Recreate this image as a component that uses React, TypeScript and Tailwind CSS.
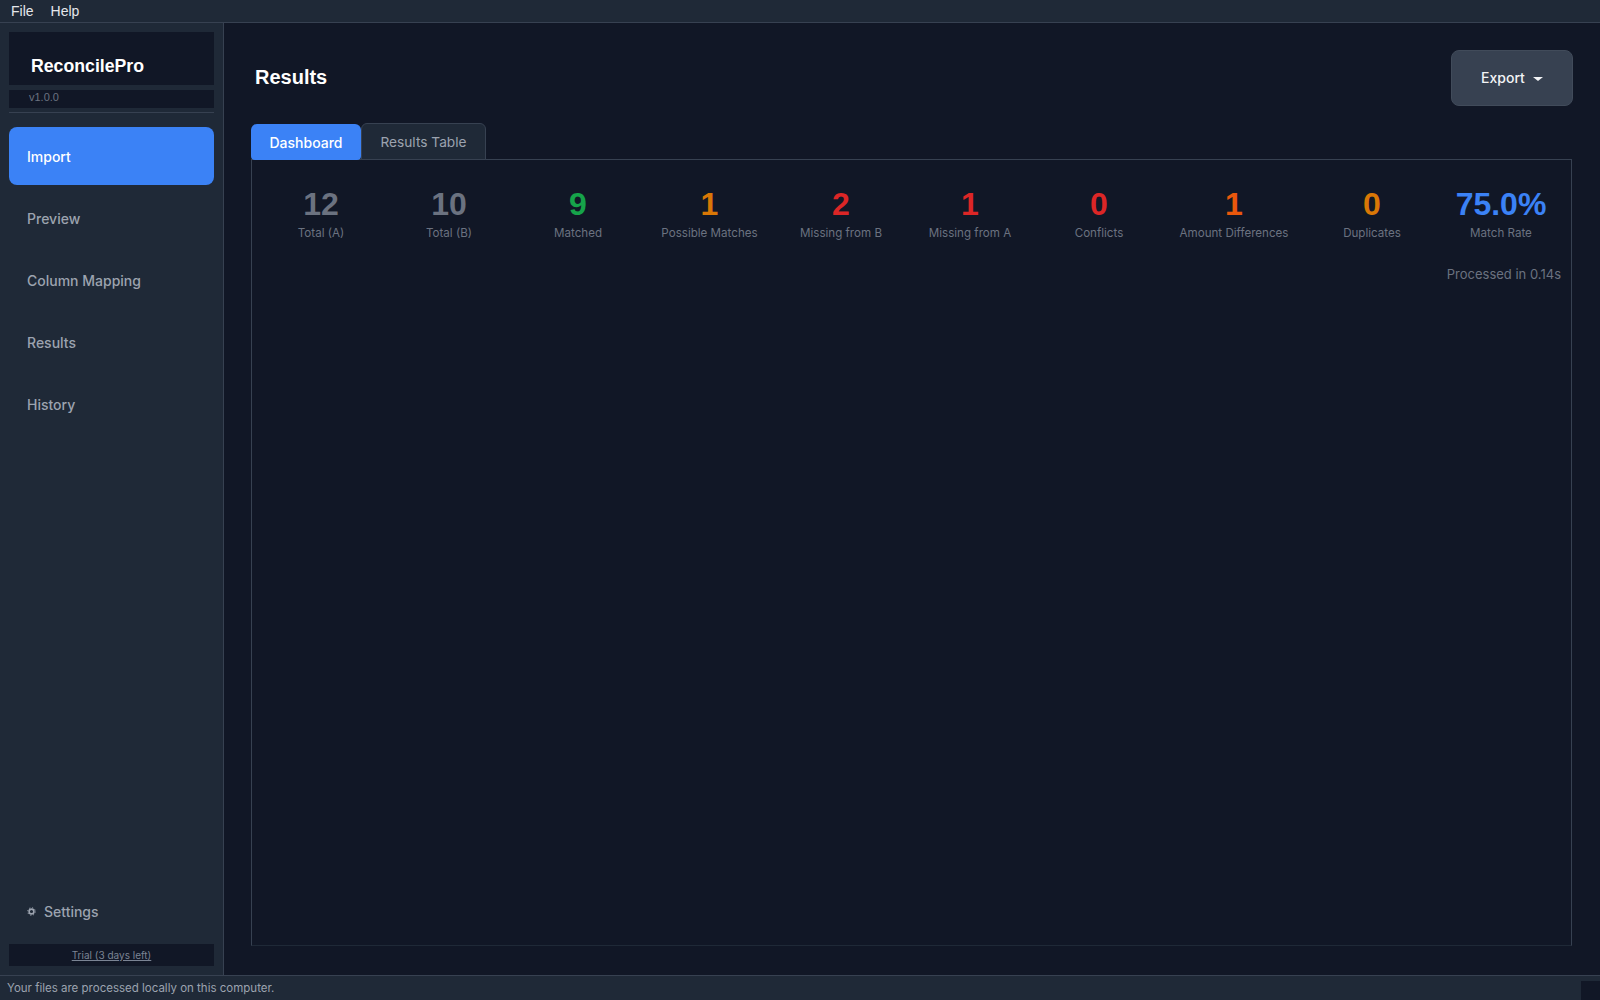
import React from 'react';

const navItems = ['Import', 'Preview', 'Column Mapping', 'Results', 'History'];

const stats = [
  { value: '12', label: 'Total (A)', color: 'text-[#6b7280]', width: 'w-[102px]' },
  { value: '10', label: 'Total (B)', color: 'text-[#6b7280]', width: 'w-[104px]' },
  { value: '9', label: 'Matched', color: 'text-[#16a34a]', width: 'w-[104px]' },
  { value: '1', label: 'Possible Matches', color: 'text-[#d97706]', width: 'w-[109px]' },
  { value: '2', label: 'Missing from B', color: 'text-[#dc2626]', width: 'w-[104px]' },
  { value: '1', label: 'Missing from A', color: 'text-[#dc2626]', width: 'w-[104px]' },
  { value: '0', label: 'Conflicts', color: 'text-[#dc2626]', width: 'w-[104px]' },
  { value: '1', label: 'Amount Differences', color: 'text-[#ea580c]', width: 'w-[116px]' },
  { value: '0', label: 'Duplicates', color: 'text-[#d97706]', width: 'w-[110px]' },
  { value: '75.0%', label: 'Match Rate', color: 'text-[#3b82f6]', width: 'w-[98px]' },
];

const Sidebar: React.FC = () => (
  <aside className="w-[224px] shrink-0 bg-[#1f2937] border-r border-[#374151] px-[9px] pt-[9px] pb-[9px] flex flex-col">
    <div className="h-[53px] bg-[#111726] pl-[22px] pt-[23px] text-[17.7px] leading-[22px] font-bold text-white">ReconcilePro</div>
    <div className="h-[18px] mt-[5px] bg-[#111726] pl-[20px] text-[11px] leading-[15px] text-[#6b7280]">v1.0.0</div>
    <div className="h-px mt-[4px] bg-[#374151]" />
    <nav className="mt-[14px] flex flex-col gap-[4px] font-['Inter',sans-serif]">
      {navItems.map((item, i) => (
        <div
          key={item}
          className={`h-[58px] rounded-lg pl-[18px] flex items-center text-[14px] font-medium ${i === 0 ? 'bg-[#3b82f6] text-white' : 'text-[#9ca3af]'}`}
        >
          {item}
        </div>
      ))}
    </nav>
    <div className="mt-auto h-[22px] pl-[18px] flex items-center gap-[8px] text-[14px] font-medium text-[#9ca3af] font-['Inter',sans-serif]">
      <svg width="9" height="9" viewBox="0 0 9 9">
        <circle cx="4.5" cy="4.5" r="2.4" fill="none" stroke="#9ca3af" strokeWidth="1.6" />
        <circle cx="4.5" cy="4.5" r="3.8" fill="none" stroke="#9ca3af" strokeWidth="1" strokeDasharray="1.2 1.8" />
      </svg>
      Settings
    </div>
    <div className="h-[22px] mt-[22px] pt-[1px] bg-[#111726] flex items-center justify-center text-[10px] text-[#7b8494] underline font-['Inter',sans-serif]">Trial (3 days left)</div>
  </aside>
);

const StatsRow: React.FC = () => (
  <div className="flex gap-[25px]">
    {stats.map(stat => (
      <div key={stat.label} className={`${stat.width} flex flex-col items-center`}>
        <div className={`text-[32px] leading-[38px] font-bold ${stat.color}`}>{stat.value}</div>
        <div className="mt-[2px] text-[11.6px] leading-[16px] whitespace-nowrap text-[#6b7280] font-['Inter',sans-serif]">{stat.label}</div>
      </div>
    ))}
  </div>
);

const App: React.FC = () => {
  return (
    <div className="w-[1600px] h-screen flex flex-col bg-[#111726] font-['Liberation_Sans',Arial,sans-serif] overflow-hidden">
      <div className="h-[23px] shrink-0 bg-[#1f2937] border-b border-[#374151] pl-[11px] flex items-center gap-[17px] text-[14px] text-[#e5e7eb]">
        <span>File</span>
        <span>Help</span>
      </div>

      <div className="flex-1 flex min-h-0">
        <Sidebar />
        <main className="flex-1 min-w-0 flex flex-col pl-[27px] pr-[28px] pt-[27px] pb-[29px]">
          <div className="h-[56px] shrink-0 -mr-px flex items-center justify-between pl-[4px]">
            <h1 className="text-[20px] leading-[28px] font-bold text-white mb-[3px]">Results</h1>
            <button className="w-[122px] h-[56px] pb-[1px] bg-[#374151] border border-[#414b5a] rounded-lg flex items-center justify-center gap-[8px] text-[14px] font-medium text-[#f3f4f6] font-['Inter',sans-serif]">
              Export
              <span className="w-0 h-0 border-x-[5px] border-x-transparent border-t-[4px] border-t-[#f3f4f6] mt-[2px]" />
            </button>
          </div>

          <div className="relative z-10 mt-[17px] h-[37px] shrink-0 flex items-end font-['Inter',sans-serif]">
            <div className="w-[110px] h-[36px] bg-[#3b82f6] rounded-t-md rounded-b-sm flex items-center justify-center text-[14px] font-medium text-white">Dashboard</div>
            <div className="w-[125px] h-[37px] pt-[1px] bg-[#1f2937] border border-[#374151] rounded-t-md flex items-center justify-center text-[13.7px] text-[#9ca3af]">Results Table</div>
          </div>

          <section className="flex-1 -mt-px border border-[#374151] border-b-[#1f2937] pl-[18px] pr-[10px] pt-[25px]">
            <StatsRow />
            <div className="mt-[25px] text-right text-[13px] leading-[16px] text-[#6b7280] font-['Inter',sans-serif]">Processed in 0.14s</div>
          </section>
        </main>
      </div>

      <div className="h-[25px] shrink-0 bg-[#1f2937] border-t border-[#374151] pl-[7px] flex items-center justify-between text-[11.5px] text-[#9ca3af] font-['Inter',sans-serif]">
        <span className="pt-[2px]">Your files are processed locally on this computer.</span>
        <div className="w-[19px] h-[19px] self-end bg-[#111726]" />
      </div>
    </div>
  );
};

export default App;
